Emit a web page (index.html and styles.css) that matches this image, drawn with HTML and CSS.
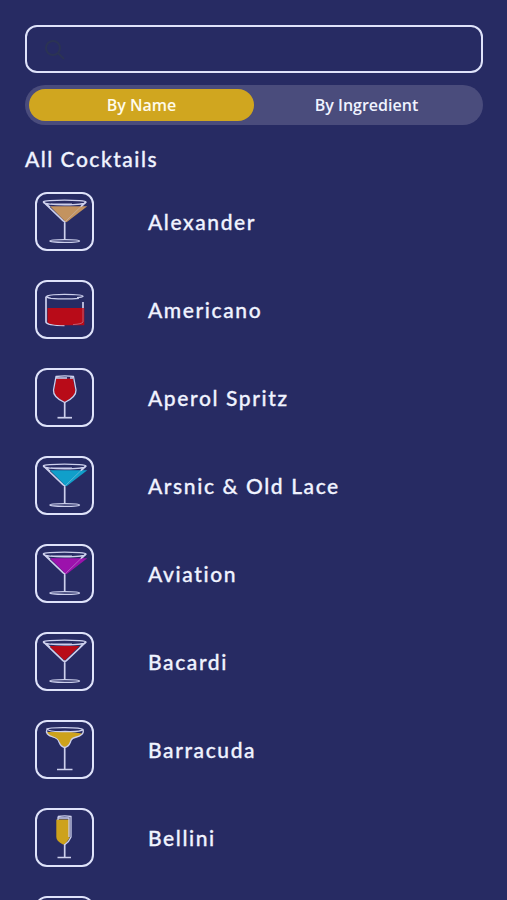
FILE: index.html
```
<!DOCTYPE html>
<html lang="en">

<head>
    <meta charset="UTF-8">
    <meta name="viewport" content="width=device-width, initial-scale=1.0">
    <title>Cocktails</title>
    <link rel="stylesheet" href="styles.css">
</head>

<body>
    <!-- Glass shapes shared by the list, the drink takes the colour of the icon -->
    <svg class="shapes">
        <symbol id="martini" viewBox="2 2 55 55">
            <path d="M8.5 10L28 28.6Q29.7 30 31.4 28.6L51 10M29.7 29.5V48" />
            <path class="drink" d="M15 14.3H52.3L31.5 30.3L29.7 29Z" />
            <path class="thin" d="M8.3 10C8 7.6 51 7.6 51 10C51 13.8 8.3 13.8 8.3 10ZM16 12.2H37M9 10.5L15 15M50 10.5L46 14.5" />
            <path class="shine" d="M46 14.5L31 29" />
            <ellipse class="thin" cx="29.7" cy="49" rx="14.8" ry="1.4" />
        </symbol>
        <symbol id="martini-inside" viewBox="2 2 55 55">
            <path class="drink" d="M14 14H44.5L29.7 28.5Z" />
            <path d="M8.5 10L28 28.6Q29.7 30 31.4 28.6L51 10M29.7 29.5V48" />
            <path class="thin" d="M8.3 10C8 7.6 51 7.6 51 10C51 13.8 8.3 13.8 8.3 10ZM16 12.2H37M9 10.5L15 15M50 10.5L45 15" />
            <ellipse class="thin" cx="29.7" cy="49" rx="14.8" ry="1.4" />
        </symbol>
        <symbol id="rocks" viewBox="2 2 55 55">
            <path d="M11 16.5V42Q12 45.3 29.5 45.3" />
            <path class="drink" d="M12.5 28H49.3V45.3H30Q12.5 45 12.5 42Z" />
            <path class="thin" d="M44 18.3Q30 19.6 16 18.3C8 17 10 14.3 29.5 14.3Q48 14.3 48 16.3Q47 17.3 42 17.6" />
            <path d="M48 22V28" />
            <path class="shine" d="M48 28V42Q47 44 38 44.6" />
        </symbol>
        <symbol id="wine" viewBox="2 2 55 55">
            <path class="drink" d="M21 10.5H38L40.5 24Q39 29 29.7 34Q20 29 19 24Z" />
            <path class="thin" d="M21 8.5Q30 7.3 38.5 8.5L41 22C41.3 28 35 32 29.7 34.5C24 32 18 28 18.5 22ZM21 10H32M35 10H38" />
            <path d="M29.7 34V49" />
            <path d="M22.5 49.7H37" />
        </symbol>
        <symbol id="coupe" viewBox="2 2 55 55">
            <path class="drink" d="M12 12H36L47 13.5Q45 16.5 38 18.5Q35.5 20 35 23Q33 27 29.7 27Q25.5 27 24.5 22Q23.5 18.5 17 17Q12 15 12 12Z" />
            <path class="thin" d="M12 9C14 7 46 7 48 9.5Q50 15 40 17.5Q36 18.5 35.5 22Q33.5 27 29.7 27.5Q26 27 24 22Q23 18.5 18 17Q9.5 14.5 12 9Q14 12 30 11.5Q46 12 48 9.5" />
            <path d="M29.7 27V49M22 49.5H37.5" />
        </symbol>
        <symbol id="flute" viewBox="2 2 55 55">
            <path class="drink" d="M21.3 11.5H34.5V30L30 36.5H28Q21.3 33 21.3 29Z" />
            <path class="thin" d="M23 8.5Q30 7.3 36 8.5V29Q34 34 30 36.5M23 8.5V12M23 10H34V29" />
            <path d="M29.7 36V49M22.5 49.5H36" />
        </symbol>
    </svg>

    <div class="search">
        <svg class="search-icon" viewBox="0 0 20 20">
            <circle cx="8" cy="8" r="7" />
            <path d="M13 13L19 19" />
        </svg>
    </div>

    <div class="tabs">
        <div class="tab active">By Name</div>
        <div class="tab">By Ingredient</div>
    </div>

    <h1>All Cocktails</h1>

    <div class="list">
        <div class="row">
            <div class="glass brown"><svg><use href="#martini" /></svg></div>
            <p>Alexander</p>
        </div>
        <div class="row">
            <div class="glass red"><svg><use href="#rocks" /></svg></div>
            <p>Americano</p>
        </div>
        <div class="row">
            <div class="glass red"><svg><use href="#wine" /></svg></div>
            <p>Aperol Spritz</p>
        </div>
        <div class="row">
            <div class="glass blue"><svg><use href="#martini" /></svg></div>
            <p>Arsnic &amp; Old Lace</p>
        </div>
        <div class="row">
            <div class="glass purple"><svg><use href="#martini" /></svg></div>
            <p>Aviation</p>
        </div>
        <div class="row">
            <div class="glass red"><svg><use href="#martini-inside" /></svg></div>
            <p>Bacardi</p>
        </div>
        <div class="row">
            <div class="glass gold"><svg><use href="#coupe" /></svg></div>
            <p>Barracuda</p>
        </div>
        <div class="row">
            <div class="glass gold"><svg><use href="#flute" /></svg></div>
            <p>Bellini</p>
        </div>
        <div class="row">
            <div class="glass"></div>
        </div>
    </div>
</body>

</html>
```

FILE: styles.css
```
body {
    background-color: #272b63;
    box-sizing: border-box;
    height: 900px;
    margin: 0;
    padding: 25px 24px 0 25px;
    overflow: hidden;
    color: #f0f3ff;
    font-family: Lato, sans-serif;
}

.shapes {
    display: none;
}

.search {
    box-sizing: border-box;
    height: 48px;
    padding: 13px 18px;
    border: 2px solid #dfe3fa;
    border-radius: 12px;
}

.search-icon {
    display: block;
    width: 20px;
    height: 20px;
    fill: none;
    stroke: #2b3354;
    stroke-width: 2;
}

.tabs {
    display: flex;
    box-sizing: border-box;
    height: 40px;
    margin-top: 12px;
    padding: 4px;
    border-radius: 20px;
    background-color: #4a4c7c;
}

.tab {
    flex: 1;
    border-radius: 16px;
    font-family: "Open Sans", sans-serif;
    font-size: 16px;
    font-weight: 600;
    line-height: 32px;
    text-align: center;
}

.active {
    background-color: #d0a61f;
    color: #fffbea;
}

h1 {
    margin: 19px 0;
    font-size: 21px;
    font-weight: 500;
    line-height: 29px;
    letter-spacing: 1.5px;
    -webkit-text-stroke: 0.3px;
}

.list {
    display: flex;
    flex-direction: column;
    gap: 29px;
    padding-left: 10px;
}

.row {
    display: flex;
    align-items: center;
    flex-shrink: 0;
    gap: 54px;
    height: 59px;
}

.row p {
    margin: 0;
    padding-bottom: 1px;
    font-size: 21px;
    font-weight: 500;
    letter-spacing: 1.6px;
    -webkit-text-stroke: 0.3px;
}

.glass {
    box-sizing: border-box;
    width: 59px;
    height: 59px;
    border: 2px solid #dfe3fa;
    border-radius: 12px;
}

.glass svg {
    display: block;
    width: 55px;
    height: 55px;
    fill: none;
    stroke: #cdd0ec;
    stroke-width: 1.7;
}

.thin {
    stroke-width: 1.3;
}

.shine {
    stroke-width: 1;
    stroke-opacity: 0.4;
}

.drink {
    fill: currentColor;
    stroke: none;
}

.brown {
    color: #c3935f;
}

.red {
    color: #b80b18;
}

.blue {
    color: #109fca;
}

.purple {
    color: #9c12ac;
}

.gold {
    color: #cda21c;
}
```
